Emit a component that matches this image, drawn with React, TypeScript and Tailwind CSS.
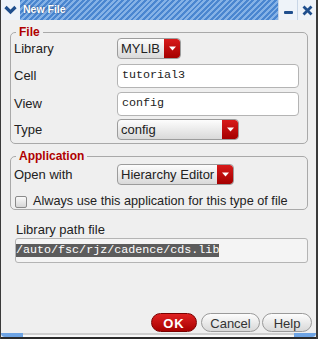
import React from 'react';

const sans = { fontFamily: '"Liberation Sans", Arial, sans-serif' };

function Combo({ value, width }: { value: string; width: string }) {
  return (
    <div className={`flex h-full ${width} rounded-[4px] border border-[#9c9c9c] bg-gradient-to-b from-[#fdfdfd] to-[#d9d9d9] overflow-hidden`}>
      <div className="flex flex-1 items-center pl-[3px] text-[13px] text-[#222]">{value}</div>
      <div className="flex w-[16px] items-center justify-center bg-gradient-to-b from-[#d81a1a] to-[#a50000] rounded-r-[3px]">
        <svg width="7" height="5" viewBox="0 0 7 5">
          <path d="M0 0.5 H7 L3.5 4.5 Z" fill="#fff" />
        </svg>
      </div>
    </div>
  );
}

function TextField({ value }: { value: string }) {
  return (
    <div className="flex h-full w-[182px] items-center rounded-[4px] border border-[#b4b4b4] bg-white pl-[4px] font-['Liberation_Mono',monospace] text-[11.7px] text-[#222]">
      {value}
    </div>
  );
}

function Row({ label, children, className }: { label: string; children: React.ReactNode; className: string }) {
  return (
    <div className={`flex items-center ${className}`}>
      <div className="w-[106px] pl-[3px] text-[13px] text-[#222]">{label}</div>
      {children}
    </div>
  );
}

export default function App() {
  return (
    <div
      className="flex h-[339px] w-[318px] flex-col border-l border-r-2 border-l-[#3a3a3a] border-r-[#3a3a3a] bg-[#efefef]"
      style={sans}
    >
      {/* title bar */}
      <div className="flex h-[20px] shrink-0">
        <div className="flex w-[19px] items-center justify-center bg-[#eef3f9]">
          <svg width="13" height="10" viewBox="0 0 13 10">
            <path d="M1.5 2 L6.5 7 L11.5 2" stroke="#1f4f8e" strokeWidth="3.2" fill="none" />
          </svg>
        </div>
        <div className="flex flex-1 items-center bg-[repeating-linear-gradient(135deg,#4a86d0_0px,#4a86d0_2px,#85b2e6_2px,#85b2e6_4px)] pl-[3px]">
          <span className="text-[10.5px] font-bold text-white [text-shadow:0_0_2px_#1a3d70]">New File</span>
        </div>
        <div className="flex w-[19px] items-center justify-center border-l border-[#c9d6e6] bg-[#eef3f9]">
          <div className="mt-[4px] h-[3px] w-[9px] rounded-[1px] bg-[#1f4f8e]" />
        </div>
        <div className="flex w-[19px] items-center justify-center border-l border-[#c9d6e6] bg-[#eef3f9]">
          <svg width="11" height="11" viewBox="0 0 11 11">
            <path d="M1.5 1.5 L9.5 9.5 M9.5 1.5 L1.5 9.5" stroke="#1f4f8e" strokeWidth="2.8" />
          </svg>
        </div>
      </div>

      <div className="flex flex-1 flex-col pl-[9px] pr-[8px]">
        {/* File group */}
        <fieldset className="mt-[6px] rounded-[5px] border border-[#a9a9a9] pb-[3px]">
          <legend className="ml-[5px] px-[3px] text-[12px] font-bold leading-[12px] text-[#b00000]">File</legend>
          <Row label="Library" className="h-[21px]">
            <Combo value="MYLIB" width="w-[64px]" />
          </Row>
          <Row label="Cell" className="mt-[5px] h-[24px]">
            <TextField value="tutorial3" />
          </Row>
          <Row label="View" className="mt-[4px] h-[24px]">
            <TextField value="config" />
          </Row>
          <Row label="Type" className="mt-[3px] h-[21px]">
            <Combo value="config" width="w-[122px]" />
          </Row>
        </fieldset>

        {/* Application group */}
        <fieldset className="mt-[6px] rounded-[5px] border border-[#a9a9a9] pb-[1px]">
          <legend className="ml-[5px] px-[3px] text-[12px] font-bold leading-[12px] text-[#b00000]">Application</legend>
          <Row label="Open with" className="mt-[2px] h-[21px]">
            <Combo value="Hierarchy Editor" width="w-[117px]" />
          </Row>
          <div className="mt-[10px] flex h-[13px] items-center pl-[4px]">
            <div className="h-[12px] w-[12px] rounded-[2px] border border-[#8a8a8a] bg-gradient-to-b from-[#fafafa] to-[#d6d6d6]" />
            <span className="ml-[6px] text-[12.7px] text-[#222]">Always use this application for this type of file</span>
          </div>
        </fieldset>

        {/* Library path */}
        <div className="mt-[12px] pl-[6px] text-[13px] leading-[16px] text-[#222]">Library path file</div>
        <div className="ml-[5px] flex h-[25px] items-center rounded-[3px] border border-[#b4b4b4] bg-[#f4f4f4]">
          <span className="bg-[#5c5c5c] font-['Liberation_Mono',monospace] text-[11.7px] leading-[13px] text-white">
            /auto/fsc/rjz/cadence/cds.lib
          </span>
        </div>

        <div className="flex-1" />

        {/* buttons */}
        <div className="mb-[1px] mr-[-4px] flex justify-end">
          <button className="h-[19px] w-[46px] rounded-full border border-[#7a0000] bg-gradient-to-b from-[#e02020] to-[#a80000] text-[13px] font-bold tracking-[1px] text-white">
            OK
          </button>
          <button className="ml-[4px] h-[19px] w-[59px] rounded-full border border-[#9a9a9a] bg-gradient-to-b from-[#fdfdfd] to-[#d8d8d8] text-[13px] text-[#333]">
            Cancel
          </button>
          <button className="ml-[2px] h-[19px] w-[50px] rounded-full border border-[#9a9a9a] bg-gradient-to-b from-[#fdfdfd] to-[#d8d8d8] text-[13px] text-[#333]">
            Help
          </button>
        </div>
      </div>

      {/* bottom frame */}
      <div className="flex h-[6px] shrink-0 items-stretch border-b-2 border-[#2a2a2a]">
        <div className="w-[22px] rounded-bl-[4px] bg-[#6ea4e4]" />
        <div className="flex-1 border-t-2 border-b-2 border-t-[#cfcfcf] border-b-[#f8f8f8] bg-[#e8e8e8]" />
        <div className="w-[22px] rounded-br-[4px] bg-[#6ea4e4]" />
      </div>
    </div>
  );
}
